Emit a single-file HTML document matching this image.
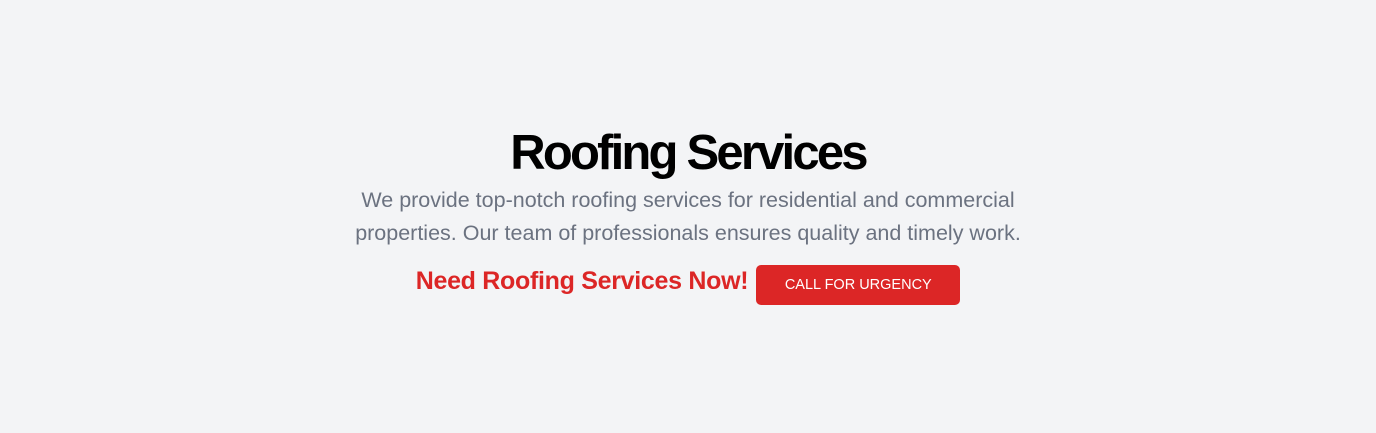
<!DOCTYPE html>
<html><head><style>
body{margin:0;width:1376px;height:433px;background:#f3f4f6;font-family:"Liberation Sans",sans-serif;position:relative;overflow:hidden}
h1{position:absolute;top:124px;left:0;width:1376px;text-align:center;margin:0;font-size:49px;line-height:58px;font-weight:bold;color:#000;letter-spacing:-2.8px}
p{position:absolute;top:184px;left:318px;width:740px;text-align:center;margin:0;font-size:21.5px;line-height:33px;color:#6b7280}
.row{position:absolute;top:265px;left:0;width:1376px;display:flex;justify-content:center;align-items:center}
.n{color:#dc2626;font-weight:bold;font-size:25px;margin-right:8px;margin-top:-8px;letter-spacing:-0.3px}
.b{background:#dc2626;color:#fff;width:204px;height:40px;border-radius:5px;font-size:14.5px;display:flex;align-items:center;justify-content:center}
</style></head><body>
<h1>Roofing Services</h1>
<p>We provide top-notch roofing services for residential and commercial properties. Our team of professionals ensures quality and timely work.</p>
<div class="row"><span class="n">Need Roofing Services Now!</span><div class="b">CALL FOR URGENCY</div></div>
</body></html>
